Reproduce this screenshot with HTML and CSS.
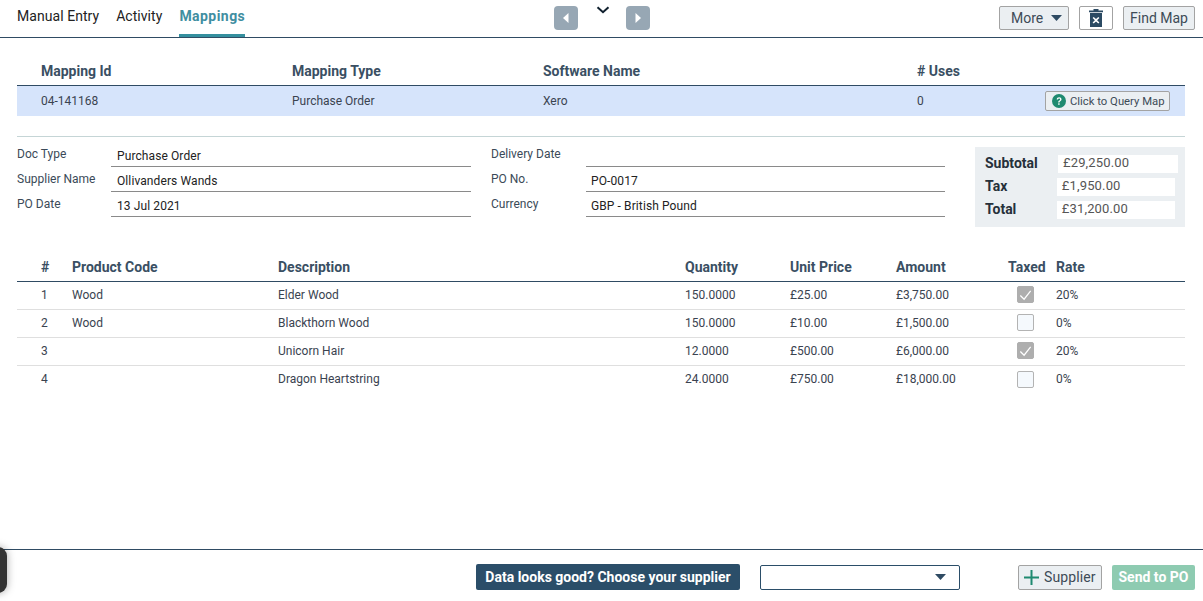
FILE: index.html
```html
<!DOCTYPE html>
<html lang="en">
<head>
<meta charset="utf-8">
<title>Mappings</title>
<link rel="stylesheet" href="styles.css">
</head>
<body>
<div class="page">
  <header class="topbar">
    <nav class="tabs">
      <a class="tab">Manual Entry</a>
      <a class="tab">Activity</a>
      <a class="tab active">Mappings</a>
    </nav>
    <div class="pager">
      <button class="nav-btn"><svg width="8" height="12" viewBox="0 0 8 12"><path d="M6.500 1v10L1 6z" fill="#fff"/></svg></button>
      <svg class="chevron" width="14" height="8" viewBox="0 0 14 8"><path d="M1.500 1.200 7 6.200l5.500-5" fill="none" stroke="#10202e" stroke-width="2"/></svg>
      <button class="nav-btn"><svg width="8" height="12" viewBox="0 0 8 12"><path d="M1.500 1v10L7 6z" fill="#fff"/></svg></button>
    </div>
    <div class="actions">
      <button class="btn more">More<svg width="11" height="6" viewBox="0 0 11 6"><path d="M0 0h11L5.500 6z" fill="#2f4b63"/></svg></button>
      <button class="btn trash"><svg width="14" height="18" viewBox="0 0 14 18"><path d="M0 1.500h4.500V0h5v1.500H14v1.700H0z" fill="#2b4a63"/><path d="M1 4h12v14H1z" fill="#2b4a63"/><path d="m4.700 8 2.300 2.100L9.300 8l1.100 1.100-2.300 2.200 2.300 2.200-1.100 1.100L7 12.500l-2.300 2.100-1.100-1.100 2.300-2.200-2.300-2.200z" fill="#fff"/></svg></button>
      <button class="btn find">Find Map</button>
    </div>
  </header>

  <main class="content">
    <section class="map-table">
      <div class="map-row map-head">
        <span>Mapping Id</span><span>Mapping Type</span><span>Software Name</span><span># Uses</span><span></span>
      </div>
      <div class="map-row map-body">
        <span>04-141168</span><span>Purchase Order</span><span>Xero</span><span>0</span>
        <button class="btn query"><svg width="14" height="14" viewBox="0 0 14 14"><circle cx="7" cy="7" r="7" fill="#1f8a70"/><path d="M4.700 5.400C4.800 4 5.800 3.300 7.100 3.300c1.400 0 2.400.8 2.400 2 0 1-.6 1.500-1.200 1.900-.6.400-.8.700-.8 1.300H6.200c0-1 .3-1.500 1-2 .5-.3.900-.6.900-1.100 0-.5-.4-.9-1-.9s-1 .4-1.100 1z" fill="#fff"/><rect x="6.200" y="9.300" width="1.400" height="1.500" fill="#fff"/></svg>Click to Query Map</button>
      </div>
    </section>

    <section class="details">
      <div class="fields">
        <div class="field"><label>Doc Type</label><div class="value">Purchase Order</div></div>
        <div class="field second"><label>Delivery Date</label><div class="value"></div></div>
        <div class="field"><label>Supplier Name</label><div class="value">Ollivanders Wands</div></div>
        <div class="field second"><label>PO No.</label><div class="value">PO-0017</div></div>
        <div class="field"><label>PO Date</label><div class="value">13 Jul 2021</div></div>
        <div class="field second"><label>Currency</label><div class="value">GBP - British Pound</div></div>
      </div>
      <div class="summary">
        <div class="sum-row first"><b>Subtotal</b><span>£29,250.00</span></div>
        <div class="sum-row"><b>Tax</b><span>£1,950.00</span></div>
        <div class="sum-row"><b>Total</b><span>£31,200.00</span></div>
      </div>
    </section>

    <section class="lines">
      <div class="line line-head">
        <span>#</span><span>Product Code</span><span>Description</span><span>Quantity</span><span>Unit Price</span><span>Amount</span><span>Taxed</span><span>Rate</span>
      </div>
      <div class="line">
        <span>1</span><span>Wood</span><span>Elder Wood</span><span>150.0000</span><span>£25.00</span><span>£3,750.00</span><span class="check on"><svg width="16" height="14" viewBox="0 0 16 14"><path d="m2.500 7.500 4 4 7-9" fill="none" stroke="#fff" stroke-width="1.300"/></svg></span><span>20%</span>
      </div>
      <div class="line">
        <span>2</span><span>Wood</span><span>Blackthorn Wood</span><span>150.0000</span><span>£10.00</span><span>£1,500.00</span><span class="check"></span><span>0%</span>
      </div>
      <div class="line">
        <span>3</span><span></span><span>Unicorn Hair</span><span>12.0000</span><span>£500.00</span><span>£6,000.00</span><span class="check on"><svg width="16" height="14" viewBox="0 0 16 14"><path d="m2.500 7.500 4 4 7-9" fill="none" stroke="#fff" stroke-width="1.300"/></svg></span><span>20%</span>
      </div>
      <div class="line last">
        <span>4</span><span></span><span>Dragon Heartstring</span><span>24.0000</span><span>£750.00</span><span>£18,000.00</span><span class="check"></span><span>0%</span>
      </div>
    </section>
  </main>

  <footer class="footer">
    <div class="badge">Data looks good? Choose your supplier</div>
    <div class="select"><svg width="11" height="6" viewBox="0 0 11 6"><path d="M0 0h11L5.500 6z" fill="#2f4b63"/></svg></div>
    <button class="btn supplier"><svg width="15" height="15" viewBox="0 0 15 15"><path d="M6.500 0h2v6.500H15v2H8.500V15h-2V8.500H0v-2h6.500z" fill="#1f8a70"/></svg>Supplier</button>
    <button class="send">Send to PO</button>
  </footer>
  <div class="widget"></div>
</div>
</body>
</html>
```

FILE: styles.css
```css
* { box-sizing: border-box; }
html, body { margin: 0; height: 100%; overflow: hidden; background: #fff; }
body { font-family: Roboto, "Liberation Sans", sans-serif; font-size: 12px; color: #333; }
button { font-family: inherit; }

.page { position: relative; display: flex; flex-direction: column; height: 601px; }

.topbar { display: grid; grid-template-columns: 1fr auto 1fr; height: 38px; padding: 0 8px 0 17px; border-bottom: 1px solid #2f4b63; }
.tabs { display: flex; gap: 17px; }
.tab { height: 37px; padding-top: 8px; font-size: 14px; line-height: 16px; color: #222; letter-spacing: .05px; }
.tab.active { font-weight: 700; color: #3f8ea1; border-bottom: 3px solid #35909f; letter-spacing: .45px; margin-left: 0; }

.pager { display: flex; gap: 16px; padding-top: 6px; margin-right: 8px; align-items: flex-start; }
.nav-btn { display: flex; align-items: center; justify-content: center; width: 24px; height: 24px; padding: 0; border: 0; border-radius: 4px; background: #97a7b4; }
.chevron { margin-left: 2px; }

.actions { display: flex; gap: 10px; justify-content: flex-end; padding-top: 6px; align-items: flex-start; }
.btn { display: flex; align-items: center; height: 24px; border: 1px solid #a3a3a3; border-radius: 2px; background: #ebeff2; font-size: 14px; color: #3d4b57; padding: 0; }
.more { width: 70px; padding-left: 11px; gap: 8px; }
.trash { width: 34px; justify-content: center; background: #fff; }
.find { width: 72px; justify-content: center; }

.content { flex: 1; padding: 0 18px 0 17px; }

.map-table { margin-top: 22px; }
.map-row { display: grid; grid-template-columns: 251px 251px 374px 128px 1fr; padding-left: 24px; align-items: center; }
.map-head { height: 26px; padding-bottom: 3px; border-bottom: 1px solid #2f4b63; font-size: 14px; font-weight: 700; color: #3a4f63; line-height: 16px; }
.map-body { height: 30px; background: #d6e4fb; color: #3a4350; }
.query { justify-self: end; margin-right: 15px; width: 125px; height: 20px; font-size: 11.300px; gap: 4px; padding-left: 6px; }

.details { display: flex; justify-content: space-between; align-items: flex-start; margin-top: 20px; padding-top: 9px; border-top: 1px solid #c5d5d6; }
.fields { display: grid; grid-template-columns: 454px 454px; }
.field { display: grid; grid-template-columns: 94px 360px; height: 25px; }
.field.second { grid-template-columns: 95px 359px; margin-left: 20px; }
.field.second .value { padding-left: 5px; }
.field label { padding-top: 1px; line-height: 14px; color: #3b4a58; }
.value { padding: 3px 0 0 6px; line-height: 14px; height: 21px; border-bottom: 1px solid #8a8a8a; color: #222; letter-spacing: .1px; }

.summary { width: 210px; height: 80px; margin-top: 1px; padding: 8px 7px 0 0; background: #ebeff2; }
.sum-row { display: flex; height: 23px; padding-left: 10px; padding-right: 3px; }
.sum-row.first { padding-right: 0; }
.sum-row b { width: 73px; font-size: 14px; line-height: 16px; color: #26303a; }
.sum-row span { width: 120px; height: 18px; padding-left: 5px; background: #fff; font-size: 13px; line-height: 16px; color: #555; letter-spacing: .15px; }

.lines { margin-top: 27px; }
.line { display: grid; grid-template-columns: 31px 206px 407px 105px 106px 112px 48px 1fr; padding: 0 0 2px 24px; height: 28px; align-items: center; border-bottom: 1px solid #dfdfdf; color: #3a4350; }
.line.last { border-bottom: 0; }
.line-head { height: 28px; border-bottom: 1px solid #2f4b63; font-size: 14px; font-weight: 700; color: #3a4f63; }
.check { display: flex; align-items: center; justify-content: center; width: 17px; height: 17px; margin-left: 9px; border: 1px solid #b3b3b3; border-radius: 2px; background: #f5f9fd; }
.check.on { background: #aeaeae; border-color: #aeaeae; }

.footer { display: flex; align-items: center; height: 52px; padding: 3px 8px 0 476px; border-top: 1px solid #2f4b63; }
.badge { width: 264px; height: 26px; border-radius: 2px; background: #2b4e69; color: #fff; font-size: 14px; font-weight: 700; line-height: 26px; text-align: center; }
.select { display: flex; align-items: center; justify-content: flex-end; width: 200px; height: 25px; margin-left: 20px; padding-right: 13px; border: 1px solid #2b4e69; border-radius: 2px; }
.supplier { width: 84px; height: 25px; margin-left: 58px; padding-left: 5px; gap: 5px; letter-spacing: .1px; }
.send { width: 83px; height: 25px; margin-left: 10px; padding: 0; border: 0; border-radius: 2px; background: #8ecbb1; color: #fff; font-size: 14px; font-weight: 700; }

.widget { position: absolute; left: -30px; top: 547px; width: 37px; height: 46px; border-radius: 9px; background: #333; box-shadow: 0 0 8px rgba(0,0,0,.35); }
```
